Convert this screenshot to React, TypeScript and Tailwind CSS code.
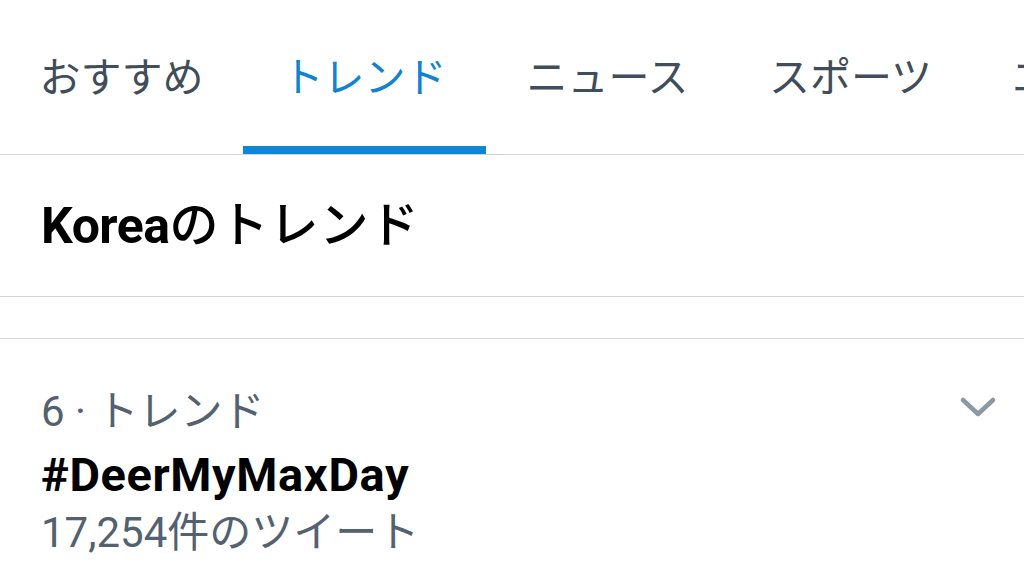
import React from "react";

const FONT = { fontFamily: 'Roboto, "Noto Sans CJK JP", sans-serif' };

const tabs = ["おすすめ", "トレンド", "ニュース", "スポーツ", "エンタメ"];

export default function App() {
  return (
    <div className="w-[1024px] h-[565px] overflow-hidden bg-white" style={FONT}>
      <div className="flex h-[155px] border-b border-[#cfd5da] overflow-hidden whitespace-nowrap">
        {tabs.map((t, i) => (
          <div key={t} className="flex flex-col shrink-0 w-[243px]">
            <div
              className={`flex-1 flex items-center justify-center pt-[10px] text-[41px] leading-none ${
                i === 1 ? "text-[#1183cf]" : "text-[#404d5a]"
              }`}
            >
              {t}
            </div>
            <div className={`h-[8px] ${i === 1 ? "bg-[#0f86d3]" : ""}`} />
          </div>
        ))}
      </div>
      <div className="h-[142px] flex items-center px-[41px] border-b border-[#cfd5da] text-black">
        <span className="text-[50px] font-bold leading-none tracking-[-0.5px]">Korea</span>
        <span className="text-[49px] font-medium leading-none tracking-[1px]">のトレンド</span>
      </div>
      <div className="h-[42px] border-b border-[#cfd5da]" />
      <div className="relative px-[41px] pt-[43px]">
        <div className="text-[42px] leading-[60px] text-[#536170]">6 · トレンド</div>
        <div className="text-[47px] leading-[65px] font-bold tracking-[0.6px] text-black">#DeerMyMaxDay</div>
        <div className="text-[42px] leading-[52px] text-[#536170]">17,254件のツイート</div>
        <svg
          className="absolute left-[958px] top-[56px]"
          width="40"
          height="24"
          viewBox="0 0 40 24"
          fill="none"
          stroke="#8b98a5"
          strokeWidth="4.5"
          strokeLinecap="round"
          strokeLinejoin="round"
        >
          <path d="M5 5 L20 19 L35 5" />
        </svg>
      </div>
    </div>
  );
}
